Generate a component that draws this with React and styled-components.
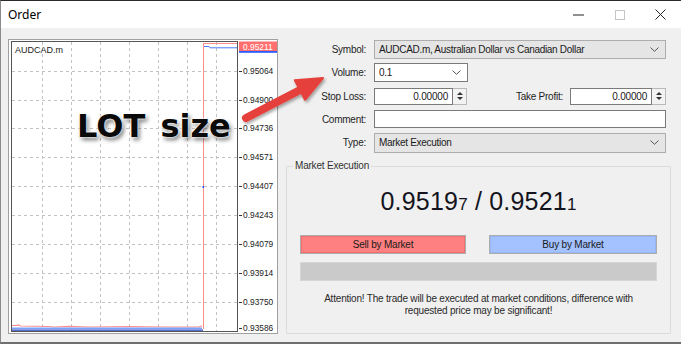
import React from 'react';
import styled, { createGlobalStyle } from 'styled-components';

const Global = createGlobalStyle`
  html, body { margin: 0; padding: 0; background: #f0f0f0; overflow: hidden; }
  #root { width: 681px; height: 344px; }
`;

const UI = `"Liberation Sans", Arial, sans-serif`;

const Window = styled.div`
  position: relative;
  width: 681px;
  height: 344px;
  box-sizing: border-box;
  border-top: 1px solid #2b2b2b;
  border-bottom: 2px solid #6f6f6f;
  border-left: 1px solid #8a8a8a;
  background: #f0f0f0;
  display: flex;
  flex-direction: column;
  font-family: ${UI};
`;

const TitleBar = styled.div`
  height: 27px;
  flex: none;
  background: #fff;
  display: flex;
  align-items: center;
  padding-left: 7px;
`;

const Title = styled.span`
  flex: 1;
  font-family: "Segoe UI", "Noto Sans", sans-serif;
  font-size: 12px;
  color: #000;
`;

const CapBtn = styled.div`
  width: 41px;
  height: 100%;
  display: flex;
  align-items: center;
  justify-content: center;
`;

const Body = styled.div`
  flex: 1;
  display: flex;
  gap: 8px;
  padding: 11px 10px 8px 7px;
  min-height: 0;
`;

const ChartPanel = styled.div`
  width: 270px;
  flex: none;
  box-sizing: border-box;
  border: 1px solid #a0a0a0;
  background: #fff;
  display: flex;
`;

const RightCol = styled.div`
  flex: 1;
  display: flex;
  flex-direction: column;
  min-width: 0;
`;

const Form = styled.div`
  display: grid;
  grid-template-columns: 80px 1fr;
  column-gap: 8px;
  row-gap: 4.33px;
  grid-auto-rows: 19px;
  margin: 1px 5px 0 0;
`;

const Label = styled.div`
  align-self: center;
  text-align: right;
  font-size: 10px;
  letter-spacing: -0.25px;
  color: #1e1e1e;
  white-space: nowrap;
`;

const Combo = styled.div`
  box-sizing: border-box;
  height: ${p => p.$h || 19}px;
  align-self: center;
  width: ${p => (p.$w ? `${p.$w}px` : '100%')};
  display: flex;
  align-items: center;
  padding: 0 6px 0 4px;
  border: 1px solid ${p => (p.$white ? '#7a7a7a' : '#adadad')};
  background: ${p => (p.$white ? '#fff' : '#e5e5e5')};
  font-size: 10px;
  letter-spacing: -0.3px;
  color: #1a1a1a;
`;

const ComboText = styled.span`
  flex: 1;
  white-space: nowrap;
`;

const TextBox = styled.div`
  box-sizing: border-box;
  height: 18px;
  align-self: center;
  border: 1px solid #7a7a7a;
  background: #fff;
`;

const SpinRow = styled.div`
  display: flex;
  align-items: center;
`;

const Spin = styled.div`
  width: ${p => p.$w}px;
  height: 17px;
  display: flex;
  flex: none;
`;

const SpinField = styled.div`
  flex: 1;
  box-sizing: border-box;
  border: 1px solid #7a7a7a;
  background: #fff;
  font-size: 10px;
  letter-spacing: -0.2px;
  color: #1a1a1a;
  text-align: right;
  padding-right: 4px;
  line-height: 15px;
`;

const Spinner = styled.div`
  width: 14px;
  box-sizing: border-box;
  border: 1px solid #b9b9b9;
  border-left: none;
  background: #f3f3f3;
  display: flex;
  flex-direction: column;
  align-items: center;
  justify-content: space-around;
  padding: 2px 0;
`;

const SpinLabel = styled(Label)`
  flex: 1;
  padding-right: 7px;
`;

const Group = styled.fieldset`
  margin: 8px 0 0 0;
  flex: 1;
  min-width: 0;
  border: 1px solid #dcdcdc;
  border-radius: 1px;
  padding: 0 13px 0 13px;
  display: flex;
  flex-direction: column;
  align-items: stretch;
`;

const Legend = styled.legend`
  font-size: 10px;
  letter-spacing: -0.2px;
  color: #333;
  padding: 0 2px;
  margin-left: -7px;
  line-height: 12px;
`;

const Price = styled.div`
  margin-top: 14px;
  text-align: center;
  font-size: 25px;
  line-height: 30px;
  color: #141420;
  letter-spacing: 0.2px;
`;

const Pip = styled.span`
  font-size: 17px;
`;

const Buttons = styled.div`
  display: grid;
  grid-template-columns: 166px 168px;
  justify-content: space-between;
  margin-top: 15px;
`;

const TradeBtn = styled.div`
  height: 19px;
  box-sizing: border-box;
  border: 1px solid #adadad;
  box-shadow: inset 0 0 0 1px ${p => (p.$sell ? '#f07070' : '#95b5f5')};
  background: ${p => (p.$sell ? '#ff8080' : '#a3c2ff')};
  display: flex;
  align-items: center;
  justify-content: center;
  font-size: 10px;
  letter-spacing: -0.2px;
  color: #1a1a1a;
`;

const Bar = styled.div`
  margin-top: 8px;
  height: 19px;
  box-sizing: border-box;
  border: 1px solid #d6d6d6;
  background: #cacaca;
`;

const Note = styled.div`
  margin-top: 12px;
  text-align: center;
  font-size: 10px;
  letter-spacing: -0.2px;
  line-height: 12px;
  color: #2a2a2a;
`;

const Annotation = styled.div`
  position: absolute;
  left: 76px;
  top: 106px;
  font-family: "DejaVu Sans", Verdana, sans-serif;
  font-weight: bold;
  font-size: 32px;
  word-spacing: 4px;
  color: #0a0a0a;
  white-space: nowrap;
  text-shadow: 0 0 2px #fff, 0 0 3px #fff, 2px 3px 4px rgba(0, 0, 0, 0.55);
`;

const ArrowLayer = styled.svg`
  position: absolute;
  left: 230px;
  top: 65px;
  overflow: visible;
`;

const Chevron = () => (
  <svg width="9" height="5" viewBox="0 0 9 5">
    <path d="M0.5 0.5 L4.5 4.3 L8.5 0.5" fill="none" stroke="#555" strokeWidth="1" />
  </svg>
);

const SpinArrows = () => (
  <>
    <svg width="6" height="3" viewBox="0 0 6 3"><path d="M0 3 L3 0 L6 3 Z" fill="#333" /></svg>
    <svg width="6" height="3" viewBox="0 0 6 3"><path d="M0 0 L3 3 L6 0 Z" fill="#333" /></svg>
  </>
);

const axis = [
  ['0.95064', 31],
  ['0.94900', 59.5],
  ['0.94736', 88],
  ['0.94571', 117],
  ['0.94407', 146],
  ['0.94243', 175],
  ['0.94079', 204],
  ['0.93914', 233],
  ['0.93750', 261.5],
  ['0.93586', 288],
];
const vgrid = [33, 62, 91, 120, 149, 178, 207];

const Chart = () => (
  <svg width="268" height="293" viewBox="0 0 268 293" fontFamily={UI}>
    {vgrid.map(x => (
      <line key={x} x1={x + 0.5} y1="2" x2={x + 0.5} y2="291" stroke="#c2c2c2" strokeDasharray="3 3" />
    ))}
    {axis.slice(0, 9).map(([, y]) => (
      <line key={y} x1="3" y1={Math.round(y) + 0.5} x2="228" y2={Math.round(y) + 0.5} stroke="#c2c2c2" strokeDasharray="3 3" />
    ))}
    {axis.map(([t, y]) => (
      <g key={t}>
        <line x1="230" y1={Math.round(y) + 0.5} x2="233" y2={Math.round(y) + 0.5} stroke="#333" />
        <text x="234" y={y + 3} fontSize="8.4" fill="#1a1a1a">{t}</text>
      </g>
    ))}
    <text x="6" y="13" fontSize="9" fill="#1a1a1a">AUDCAD.m</text>
    <rect x="230" y="1.5" width="38" height="9.5" fill="#ff6f6f" />
    <text x="234" y="9.6" fontSize="8.4" fill="#fff">0.95211</text>
    <rect x="230" y="11" width="38" height="1.8" fill="#2a5cff" />
    <path d="M194.5 3.5 H228" stroke="#ff8f8f" fill="none" />
    <path d="M195 6.5 H200 L201 7.8 H228" stroke="#4a7cff" fill="none" />
    <path d="M194.5 3 V289" stroke="#ff8f8f" fill="none" />
    <path d="M3 285.5 L8 285.3 L9 285 L12 286 L40 286.5 L45 287 L60 286.3 L80 287 L120 286.5 L160 287 L190 286.8 L193 286" stroke="#ff8f8f" strokeWidth="1.2" fill="none" />
    <path d="M3 288.3 H193" stroke="#7aa3ff" strokeWidth="1.5" fill="none" />
    <path d="M3 290.2 H194" stroke="#1f3fbf" strokeWidth="1.2" fill="none" />
    <rect x="193.5" y="146" width="1.5" height="2" fill="#2a4cff" />
    <rect x="2.5" y="1.5" width="226" height="290" fill="none" stroke="#555" />
  </svg>
);

export default function App() {
  return (
    <>
      <Global />
      <Window>
        <TitleBar>
          <Title>Order</Title>
          <CapBtn>
            <svg width="11" height="2" viewBox="0 0 11 2"><path d="M0 1 H11" stroke="#222" /></svg>
          </CapBtn>
          <CapBtn>
            <svg width="10" height="10" viewBox="0 0 10 10"><rect x="0.5" y="0.5" width="9" height="9" fill="none" stroke="#c4c4c4" /></svg>
          </CapBtn>
          <CapBtn>
            <svg width="11" height="11" viewBox="0 0 11 11"><path d="M0.5 0.5 L10.5 10.5 M10.5 0.5 L0.5 10.5" stroke="#222" /></svg>
          </CapBtn>
        </TitleBar>
        <Body>
          <ChartPanel>
            <Chart />
          </ChartPanel>
          <RightCol>
            <Form>
              <Label>Symbol:</Label>
              <Combo>
                <ComboText>AUDCAD.m, Australian Dollar vs Canadian Dollar</ComboText>
                <Chevron />
              </Combo>
              <Label>Volume:</Label>
              <Combo $white $w={94}>
                <ComboText>0.1</ComboText>
                <Chevron />
              </Combo>
              <Label>Stop Loss:</Label>
              <SpinRow>
                <Spin $w={93}>
                  <SpinField>0.00000</SpinField>
                  <Spinner><SpinArrows /></Spinner>
                </Spin>
                <SpinLabel>Take Profit:</SpinLabel>
                <Spin $w={96}>
                  <SpinField>0.00000</SpinField>
                  <Spinner><SpinArrows /></Spinner>
                </Spin>
              </SpinRow>
              <Label>Comment:</Label>
              <TextBox />
              <Label>Type:</Label>
              <Combo $h={20}>
                <ComboText>Market Execution</ComboText>
                <Chevron />
              </Combo>
            </Form>
            <Group>
              <Legend>Market Execution</Legend>
              <Price>
                0.9519<Pip>7</Pip> / 0.9521<Pip>1</Pip>
              </Price>
              <Buttons>
                <TradeBtn $sell>Sell by Market</TradeBtn>
                <TradeBtn>Buy by Market</TradeBtn>
              </Buttons>
              <Bar />
              <Note>
                Attention! The trade will be executed at market conditions, difference with
                <br />
                requested price may be significant!
              </Note>
            </Group>
          </RightCol>
        </Body>
        <Annotation>LOT size</Annotation>
        <ArrowLayer width="100" height="65" viewBox="0 0 100 65">
          <defs>
            <filter id="sh" x="-30%" y="-30%" width="160%" height="160%">
              <feDropShadow dx="1.5" dy="2" stdDeviation="1.5" floodColor="#000" floodOpacity="0.35" />
            </filter>
          </defs>
          <g filter="url(#sh)">
            <path d="M15 52 L70 23.5" stroke="#e5413b" strokeWidth="8" strokeLinecap="round" />
            <path d="M92 12 L74 33.8 L63.8 14.2 Z" fill="#e5413b" stroke="#e5413b" strokeWidth="2" strokeLinejoin="round" />
          </g>
        </ArrowLayer>
      </Window>
    </>
  );
}
